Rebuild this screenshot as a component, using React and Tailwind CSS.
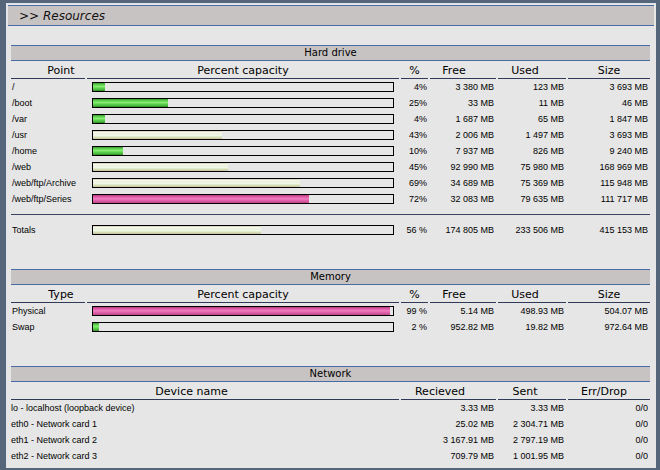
import React from "react"

const fills = {
    green: "bg-[linear-gradient(to_bottom,#3a9432_0%,#5fd452_22%,#86ec70_45%,#62d454_62%,#48bc3c_82%,#2c8626_100%)]",
    pale: "bg-[linear-gradient(to_bottom,#cdc3a4_0%,#f7f9f0_18%,#e4f0d6_38%,#f7f9f0_52%,#d9eac4_72%,#c9bd9a_100%)]",
    pink: "bg-[linear-gradient(to_bottom,#b43a7e_0%,#de5aa6_22%,#f07cbe_48%,#e062aa_68%,#c24488_100%)]",
}

const fillFor = (p) => (p > 70 ? "pink" : p > 30 ? "pale" : "green")

const drives = [
    ["/", 4, "4%", "3 380 MB", "123 MB", "3 693 MB"],
    ["/boot", 25, "25%", "33 MB", "11 MB", "46 MB"],
    ["/var", 4, "4%", "1 687 MB", "65 MB", "1 847 MB"],
    ["/usr", 43, "43%", "2 006 MB", "1 497 MB", "3 693 MB"],
    ["/home", 10, "10%", "7 937 MB", "826 MB", "9 240 MB"],
    ["/web", 45, "45%", "92 990 MB", "75 980 MB", "168 969 MB"],
    ["/web/ftp/Archive", 69, "69%", "34 689 MB", "75 369 MB", "115 948 MB"],
    ["/web/ftp/Series", 72, "72%", "32 083 MB", "79 635 MB", "111 717 MB"],
]

const memory = [
    ["Physical", 99, "99 %", "5.14 MB", "498.93 MB", "504.07 MB", "pink"],
    ["Swap", 2, "2 %", "952.82 MB", "19.82 MB", "972.64 MB", "green"],
]

const network = [
    ["lo - localhost (loopback device)", "3.33 MB", "3.33 MB", "0/0"],
    ["eth0 - Network card 1", "25.02 MB", "2 304.71 MB", "0/0"],
    ["eth1 - Network card 2", "3 167.91 MB", "2 797.19 MB", "0/0"],
    ["eth2 - Network card 3", "709.79 MB", "1 001.95 MB", "0/0"],
]

const cols = "grid grid-cols-[74px_312px_27px_66px_68px_82px] gap-x-[2px]"
const netCols = "grid grid-cols-[388px_95px_68px_82px] gap-x-[2px]"
const rowText = "font-['Liberation_Sans',Arial,sans-serif] text-[9px] leading-[16px] h-[16px] whitespace-nowrap"

const SectionBar = ({ title }) => (
    <div className="h-[16px] bg-[#c8c3c3] border-y border-[#4a6aa4] flex items-center justify-center text-[10px] leading-[14px] text-black">
        {title}
    </div>
)

const Head = ({ children, className = "" }) => (
    <div className={"h-[18px] border-b border-[#2e3a58] flex items-end justify-center pb-[1px] text-[11px] leading-[13px] text-black " + className}>
        {children}
    </div>
)

const Bar = ({ pct, kind }) => (
    <div className="h-[16px] flex items-center">
        <div className="ml-[5px] w-[302px] h-[10px] border border-black bg-[#e6e6e6]">
            <div className={"h-full " + fills[kind]} style={{ width: pct + "%" }} />
        </div>
    </div>
)

const UsageHead = ({ first }) => (
    <div className={cols}>
        <Head className="pl-[26px]">{first}</Head>
        <Head>Percent capacity</Head>
        <Head>%</Head>
        <Head className="pr-[18px]">Free</Head>
        <Head className="pr-[14px]">Used</Head>
        <Head>Size</Head>
    </div>
)

const UsageRow = ({ row }) => {
    const [name, pct, label, free, used, size, kind] = row
    return (
        <div className={cols}>
            <div className={rowText + " pl-[1px]"}>{name}</div>
            <Bar pct={pct} kind={kind || fillFor(pct)} />
            <div className={rowText + " text-right pr-[1px]"}>{label}</div>
            <div className={rowText + " text-right pr-[2px]"}>{free}</div>
            <div className={rowText + " text-right pr-[2px]"}>{used}</div>
            <div className={rowText + " text-right pr-[2px]"}>{size}</div>
        </div>
    )
}

export default function App() {
    return (
        <div className="w-[660px] h-[470px] bg-[#55657a] pt-[3px] pl-[6px] pr-[4px] pb-[2px] flex font-['DejaVu_Sans',Verdana,sans-serif] text-black">
            <div className="flex-1 bg-[#e6e6e6] border-l border-t border-[#dfe4ea] flex flex-col">
                <div className="mt-[1px] ml-[1px] mr-[2px] h-[21px] bg-[#c8c3c3] border-y border-[#4a6aa4] flex items-center pl-[11px] italic text-[12px] text-[#111]">
                    &gt;&gt; Resources
                </div>

                {/* Hard drive */}
                <div className="ml-[4px] w-[639px] mt-[19px]">
                    <SectionBar title="Hard drive" />
                    <UsageHead first="Point" />
                    {drives.map((d) => <UsageRow key={d[0]} row={d} />)}
                    <div className="mt-[7px] h-px bg-[#3a4460]" />
                    <div className="mt-[7px]">
                        <UsageRow row={["Totals", 56, "56 %", "174 805 MB", "233 506 MB", "415 153 MB", "pale"]} />
                    </div>
                </div>

                {/* Memory */}
                <div className="ml-[4px] w-[639px] mt-[31px]">
                    <SectionBar title="Memory" />
                    <UsageHead first="Type" />
                    {memory.map((m) => <UsageRow key={m[0]} row={m} />)}
                </div>

                {/* Network */}
                <div className="ml-[4px] w-[639px] mt-[31px]">
                    <SectionBar title="Network" />
                    <div className={netCols}>
                        <Head className="pr-[27px]">Device name</Head>
                        <Head className="pr-[17px]">Recieved</Head>
                        <Head className="pr-[14px]">Sent</Head>
                        <Head className="pr-[10px]">Err/Drop</Head>
                    </div>
                    {network.map((n) => (
                        <div key={n[0]} className={netCols}>
                            <div className={rowText}>{n[0]}</div>
                            <div className={rowText + " text-right pr-[2px]"}>{n[1]}</div>
                            <div className={rowText + " text-right pr-[2px]"}>{n[2]}</div>
                            <div className={rowText + " text-right pr-[2px]"}>{n[3]}</div>
                        </div>
                    ))}
                </div>
            </div>
        </div>
    )
}
